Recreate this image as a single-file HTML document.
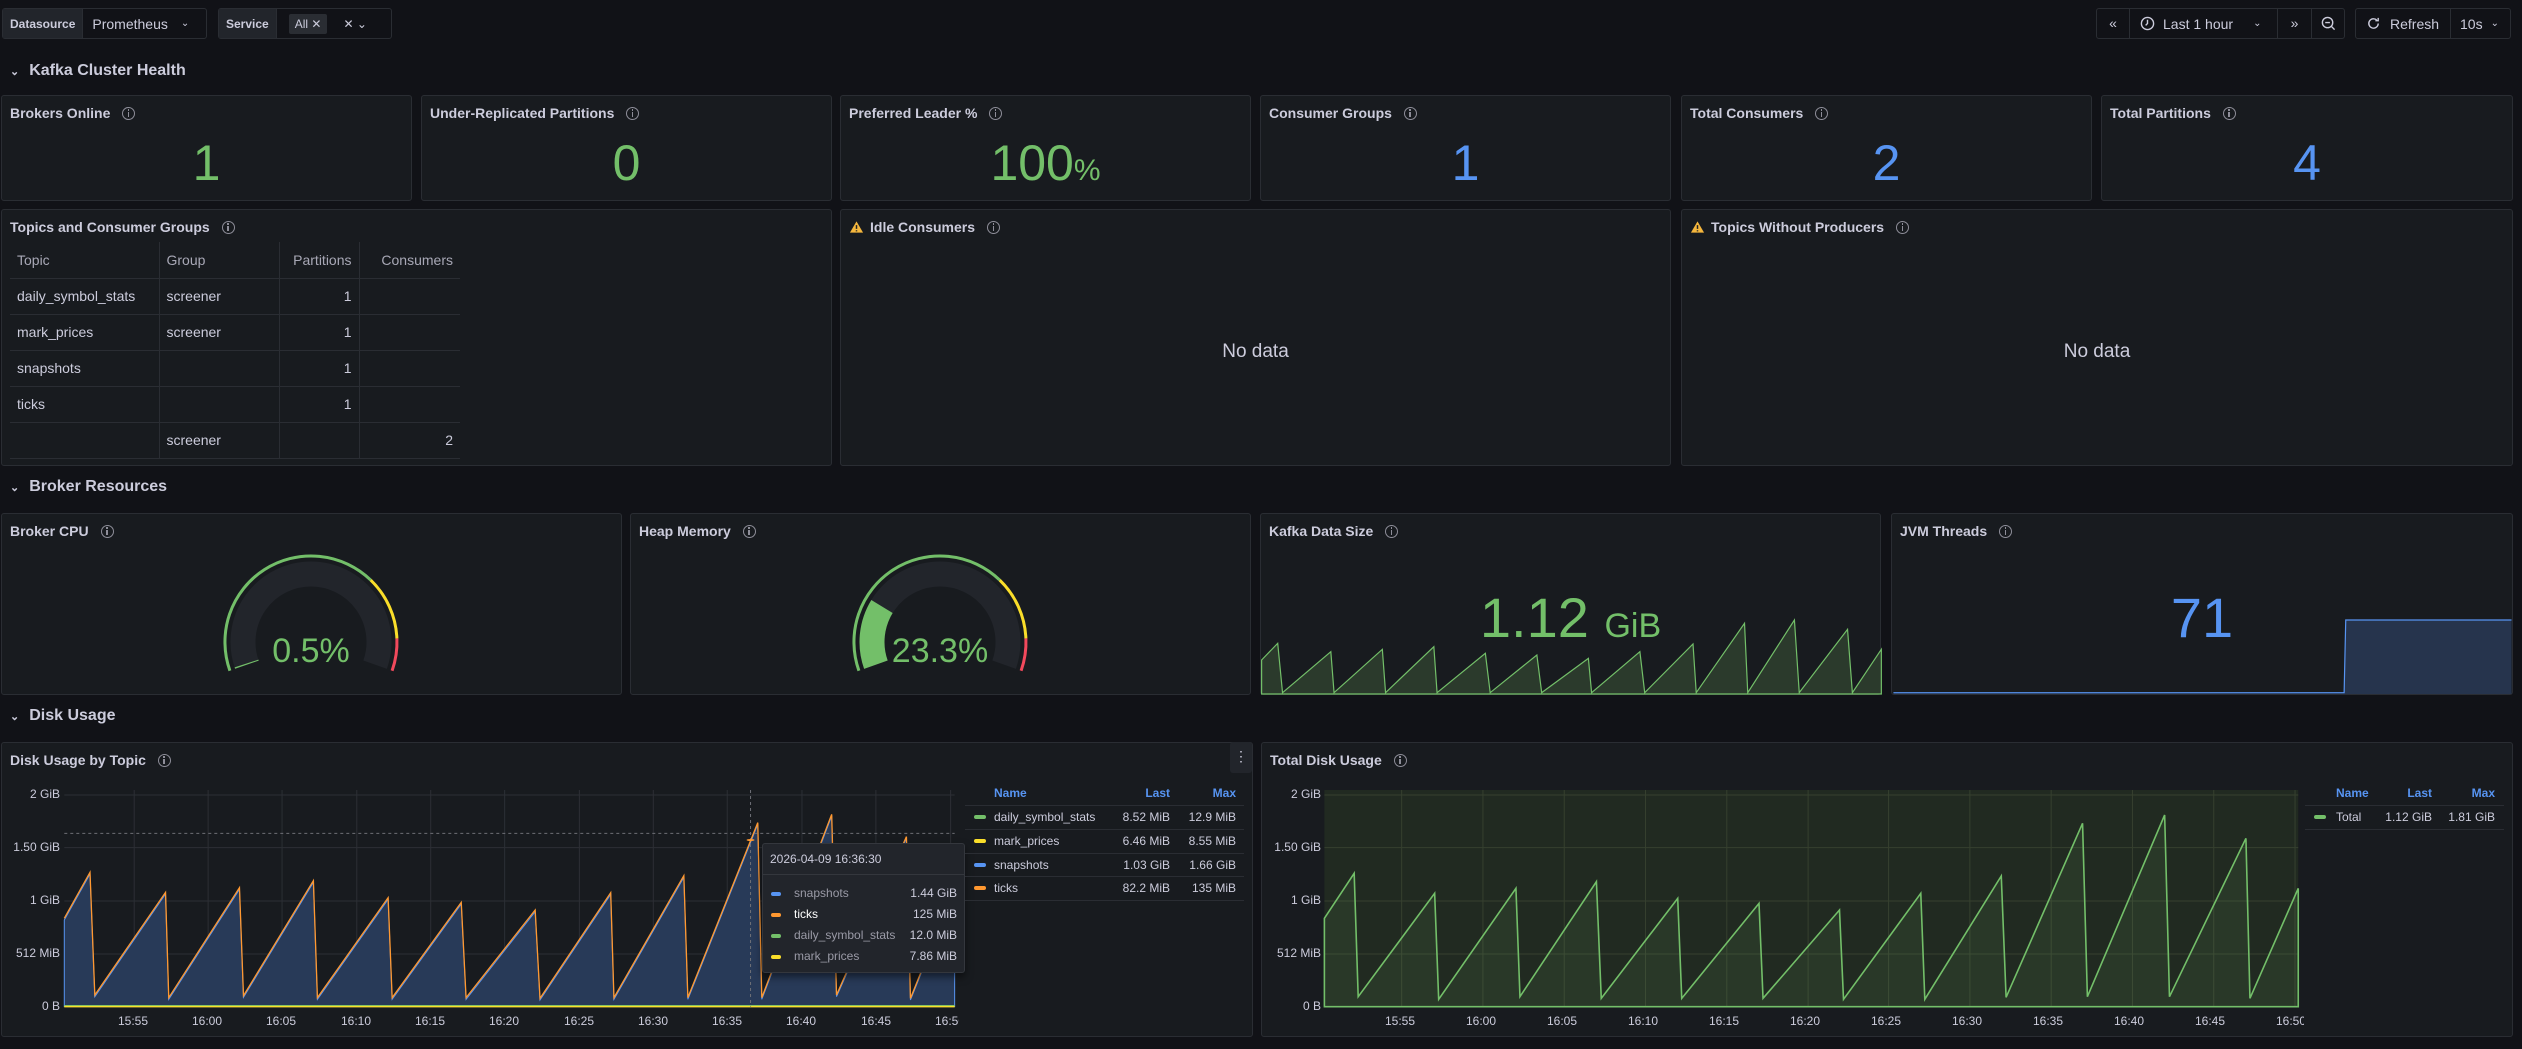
<!DOCTYPE html>
<html><head><meta charset="utf-8">
<style>
*{box-sizing:border-box;margin:0;padding:0}
body{width:2522px;height:1049px;background:#111217;font-family:"Liberation Sans",sans-serif;color:#ccccdc;position:relative;overflow:hidden}
.a{position:absolute}
.p{position:absolute;background:#181b1f;border:1px solid #2a2d33;border-radius:3px}
.t{position:absolute;left:8px;top:9px;font-size:14px;font-weight:bold;color:#ccccdc;white-space:nowrap;display:flex;align-items:center}
.i{display:inline-block;width:13px;height:13px;border:1.3px solid #8e8e99;border-radius:50%;margin-left:12px;position:relative}
.i:after{content:"";position:absolute;left:4.5px;top:4px;width:1.5px;height:5px;background:#8e8e99}
.i:before{content:"";position:absolute;left:4.5px;top:1.5px;width:1.5px;height:1.5px;background:#8e8e99}
.v{position:absolute;left:0;right:0;text-align:center;font-size:50px}
.g{color:#73bf69}.b{color:#5794f2}
.rh{position:absolute;left:10px;font-size:16px;font-weight:bold;color:#ccccdc}
.rh span{font-size:11px;color:#ccccdc;margin-right:10px;display:inline-block}
.box{position:absolute;top:8px;height:31px;border:1px solid #2a2d33;border-radius:3px;background:#111217;font-size:13px;display:flex;align-items:center}
.lbl{background:#22252b;height:100%;display:flex;align-items:center;padding:0 7px;border-right:1px solid #2a2d33;font-size:12px;font-weight:bold}
td{border-right:1px solid #2a2d33;border-bottom:1px solid #2a2d33;height:36px;padding:0 7px;font-size:14px;white-space:nowrap}
.ax{position:absolute;font-size:12px;color:#ccccdc}
.nd{position:absolute;left:0;right:0;text-align:center;font-size:19px;color:#ccccdc}
.lg{position:absolute;font-size:12px;white-space:nowrap}
.sw{position:absolute;width:12px;height:4px;border-radius:2px}
</style></head><body>

<!-- top variables -->
<div class="box" style="left:2px;width:205px"><div class="lbl">Datasource</div><span style="margin-left:9px;font-size:14px">Prometheus</span><span style="margin-left:13px;font-size:10px">⌄</span></div>
<div class="box" style="left:218px;width:174px"><div class="lbl">Service</div><span style="margin-left:12px;background:#2a2d33;padding:3px 6px;border-radius:2px;font-size:12px">All ✕</span><span style="margin-left:16px;font-size:12px">✕ ⌄</span></div>

<div class="box" style="left:2096px;width:249px;font-size:14px">
<span style="width:33px;text-align:center;border-right:1px solid #2a2d33;height:100%;line-height:29px">«</span>
<span style="width:148px;border-right:1px solid #2a2d33;height:100%;display:flex;align-items:center;padding-left:10px"><svg width="15" height="15" viewBox="0 0 16 16"><circle cx="8" cy="8" r="6.5" fill="none" stroke="#ccccdc" stroke-width="1.5"/><path d="M8 4v4l-2 2" fill="none" stroke="#ccccdc" stroke-width="1.5"/></svg><span style="margin-left:8px">Last 1 hour</span><span style="margin-left:20px;font-size:10px">⌄</span></span>
<span style="width:34px;text-align:center;border-right:1px solid #2a2d33;height:100%;line-height:29px">»</span>
<span style="width:32px;display:flex;justify-content:center"><svg width="15" height="15" viewBox="0 0 16 16"><circle cx="7" cy="7" r="5.5" fill="none" stroke="#ccccdc" stroke-width="1.5"/><path d="M4.5 7h5M11 11l3.5 3.5" stroke="#ccccdc" stroke-width="1.5"/></svg></span>
</div>
<div class="box" style="left:2355px;width:156px;font-size:14px">
<span style="width:95px;border-right:1px solid #2a2d33;height:100%;display:flex;align-items:center;padding-left:10px"><svg width="15" height="15" viewBox="0 0 16 16"><path d="M13 8a5 5 0 1 1-1.5-3.6M13 2v3h-3" fill="none" stroke="#ccccdc" stroke-width="1.5"/></svg><span style="margin-left:9px">Refresh</span></span>
<span style="padding-left:9px">10s</span><span style="margin-left:8px;font-size:10px">⌄</span>
</div>

<div class="rh" style="top:62px"><span>⌄</span>Kafka Cluster Health</div>
<div class="rh" style="top:478px"><span>⌄</span>Broker Resources</div>
<div class="rh" style="top:707px"><span>⌄</span>Disk Usage</div>

<!-- stat row -->
<div class="p" style="left:1px;top:95px;width:411px;height:106px"><div class="t">Brokers Online<span class="i"></span></div><div class="v g" style="top:38px">1</div></div>
<div class="p" style="left:421px;top:95px;width:411px;height:106px"><div class="t">Under-Replicated Partitions<span class="i"></span></div><div class="v g" style="top:38px">0</div></div>
<div class="p" style="left:840px;top:95px;width:411px;height:106px"><div class="t">Preferred Leader %<span class="i"></span></div><div class="v g" style="top:38px">100<span style="font-size:30px">%</span></div></div>
<div class="p" style="left:1260px;top:95px;width:411px;height:106px"><div class="t">Consumer Groups<span class="i"></span></div><div class="v b" style="top:38px">1</div></div>
<div class="p" style="left:1681px;top:95px;width:411px;height:106px"><div class="t">Total Consumers<span class="i"></span></div><div class="v b" style="top:38px">2</div></div>
<div class="p" style="left:2101px;top:95px;width:412px;height:106px"><div class="t">Total Partitions<span class="i"></span></div><div class="v b" style="top:38px">4</div></div>

<!-- row 2 -->
<div class="p" style="left:1px;top:209px;width:831px;height:257px"><div class="t">Topics and Consumer Groups<span class="i"></span></div>
<table class="a" style="left:8px;top:32px;border-collapse:collapse;color:#ccccdc">
<tr style="color:#a8a8b6"><td style="width:149px;border-right:1px solid #2a2d33">Topic</td><td style="width:120px">Group</td><td style="width:80px;text-align:right">Partitions</td><td style="width:101px;border-right:none;text-align:right">Consumers</td></tr>
<tr><td>daily_symbol_stats</td><td>screener</td><td style="text-align:right">1</td><td style="border-right:none"></td></tr>
<tr><td>mark_prices</td><td>screener</td><td style="text-align:right">1</td><td style="border-right:none"></td></tr>
<tr><td>snapshots</td><td></td><td style="text-align:right">1</td><td style="border-right:none"></td></tr>
<tr><td>ticks</td><td></td><td style="text-align:right">1</td><td style="border-right:none"></td></tr>
<tr><td></td><td>screener</td><td></td><td style="border-right:none;text-align:right">2</td></tr>
</table></div>
<div class="p" style="left:840px;top:209px;width:831px;height:257px"><div class="t"><svg width="15" height="14" viewBox="0 0 16 14" style="margin-right:6px"><path d="M8 1L15 13H1Z" fill="#f5b73d"/><path d="M8 5v4M8 10.5v1.2" stroke="#222" stroke-width="1.6"/></svg>Idle Consumers<span class="i"></span></div><div class="nd" style="top:131px">No data</div></div>
<div class="p" style="left:1681px;top:209px;width:832px;height:257px"><div class="t"><svg width="15" height="14" viewBox="0 0 16 14" style="margin-right:6px"><path d="M8 1L15 13H1Z" fill="#f5b73d"/><path d="M8 5v4M8 10.5v1.2" stroke="#222" stroke-width="1.6"/></svg>Topics Without Producers<span class="i"></span></div><div class="nd" style="top:131px">No data</div></div>

<!-- row 3 -->
<div class="p" style="left:1px;top:513px;width:621px;height:182px"><div class="t">Broker CPU<span class="i"></span></div></div>
<div class="p" style="left:630px;top:513px;width:621px;height:182px"><div class="t">Heap Memory<span class="i"></span></div></div>
<div class="p" style="left:1260px;top:513px;width:621px;height:182px;overflow:hidden"><div class="t">Kafka Data Size<span class="i"></span></div></div>
<div class="p" style="left:1891px;top:513px;width:622px;height:182px;overflow:hidden"><div class="t">JVM Threads<span class="i"></span></div></div>

<!-- gauges -->
<svg class="a" style="left:211px;top:542px" width="200" height="200" viewBox="0 0 200 200">
<path d="M35.9 122.7 A68 68 0 1 1 164.1 122.7" fill="none" stroke="#22252b" stroke-width="25"/>
<path d="M35.9 122.7 A68 68 0 0 1 35.5 121.5" fill="none" stroke="#73bf69" stroke-width="25"/>
<path d="M18.9 128.7 A86 86 0 0 1 159.7 38.1" fill="none" stroke="#73bf69" stroke-width="3"/>
<path d="M159.7 38.1 A86 86 0 0 1 185.9 96.4" fill="none" stroke="#fade2a" stroke-width="3"/>
<path d="M185.9 96.4 A86 86 0 0 1 181.1 128.7" fill="none" stroke="#f2495c" stroke-width="3"/>
</svg>
<div class="a g" style="left:211px;top:632px;width:200px;text-align:center;font-size:34px">0.5%</div>
<svg class="a" style="left:840px;top:542px" width="200" height="200" viewBox="0 0 200 200">
<path d="M35.9 122.7 A68 68 0 1 1 164.1 122.7" fill="none" stroke="#22252b" stroke-width="25"/>
<path d="M35.9 122.7 A68 68 0 0 1 42 64.5" fill="none" stroke="#73bf69" stroke-width="25"/>
<path d="M18.9 128.7 A86 86 0 0 1 159.7 38.1" fill="none" stroke="#73bf69" stroke-width="3"/>
<path d="M159.7 38.1 A86 86 0 0 1 185.9 96.4" fill="none" stroke="#fade2a" stroke-width="3"/>
<path d="M185.9 96.4 A86 86 0 0 1 181.1 128.7" fill="none" stroke="#f2495c" stroke-width="3"/>
</svg>
<div class="a g" style="left:840px;top:632px;width:200px;text-align:center;font-size:34px">23.3%</div>

<!-- sparklines -->
<svg class="a" style="left:1260px;top:500px" width="1262" height="230" viewBox="0 0 1568 690" preserveAspectRatio="none">
<path d="M2,480 22,430 28,578 88,455 92,578 152,448 156,578 216,440 220,578 280,460 286,578 344,465 350,578 408,475 412,578 472,455 478,578 538,432 542,578 602,370 606,578 664,360 670,578 730,388 736,578 772,448 772,582 2,582Z" fill="#2b3a2c" stroke="#73bf69" stroke-width="1.2" vector-effect="non-scaling-stroke"/>
<path d="M787,578 1347,578 1349,360 1555,360 1555,582 787,582Z" fill="#26344d"/>
<path d="M787,578 1347,578 1349,360 1555,360" fill="none" stroke="#5794f2" stroke-width="1.2" vector-effect="non-scaling-stroke"/>
</svg>
<div class="a g" style="left:1260px;top:585px;width:621px;text-align:center;font-size:56px">1.12 <span style="font-size:34px">GiB</span></div>
<div class="a b" style="left:1891px;top:585px;width:622px;text-align:center;font-size:56px">71</div>

<!-- row 4 -->
<div class="p" style="left:1px;top:742px;width:1252px;height:295px"><div class="t">Disk Usage by Topic<span class="i"></span></div></div>
<div class="a" style="left:1230px;top:742px;width:22px;height:31px;background:#22252b;border-radius:3px;text-align:center;color:#ccccdc;font-size:14px;line-height:29px">⋮</div>
<div class="p" style="left:1261px;top:742px;width:1252px;height:295px"><div class="t">Total Disk Usage<span class="i"></span></div></div>

<svg class="a" style="left:0;top:730px" width="1260" height="319" viewBox="0 0 1568 957" preserveAspectRatio="none">
<g stroke="#2c2f35" stroke-width="1" vector-effect="non-scaling-stroke">
<path d="M80,195H1188M80,353H1188M80,513H1188M80,672H1188M80,830H1188" vector-effect="non-scaling-stroke"/>
<path d="M167,180V830M259,180V830M351,180V830M444,180V830M536,180V830M628,180V830M721,180V830M813,180V830M905,180V830M998,180V830M1090,180V830M1183,180V830" vector-effect="non-scaling-stroke"/>
</g>
<path d="M80,570 112,432 118,800 206,492 210,808 298,478 303,802 390,457 395,808 483,508 488,808 574,522 580,808 666,545 672,810 760,493 764,808 851,442 856,808 943,283 948,808 1035,258 1041,800 1128,325 1133,810 1188,480 1188,830 80,830Z" fill="#283a58" stroke="#5794f2" stroke-width="1" vector-effect="non-scaling-stroke"/>
<path d="M80,565 112,427 118,795 206,487 210,803 298,473 303,797 390,452 395,803 483,503 488,803 574,517 580,803 666,540 672,805 760,488 764,803 851,437 856,803 943,278 948,803 1035,253 1041,795 1128,320 1133,805 1188,475" fill="none" stroke="#ff9830" stroke-width="1.3" vector-effect="non-scaling-stroke"/>
<path d="M80,828H1188" stroke="#73bf69" stroke-width="2" vector-effect="non-scaling-stroke"/>
<path d="M80,830H1188" stroke="#fade2a" stroke-width="1.5" vector-effect="non-scaling-stroke"/>
<path d="M80,310H1188M934,180V830" stroke="#6e6f76" stroke-dasharray="3 3" stroke-width="1" vector-effect="non-scaling-stroke"/>
<ellipse cx="934" cy="330" rx="5" ry="3" fill="#ff9830"/>
</svg>
<div class="ax" style="left:0;width:60px;text-align:right;top:787px">2 GiB</div>
<div class="ax" style="left:0;width:60px;text-align:right;top:840px">1.50 GiB</div>
<div class="ax" style="left:0;width:60px;text-align:right;top:893px">1 GiB</div>
<div class="ax" style="left:0;width:60px;text-align:right;top:946px">512 MiB</div>
<div class="ax" style="left:0;width:60px;text-align:right;top:999px">0 B</div>
<div class="ax" style="left:118px;top:1014px;width:930px;height:16px;overflow:visible">
<span class="a" style="left:0">15:55</span><span class="a" style="left:74px">16:00</span><span class="a" style="left:148px">16:05</span><span class="a" style="left:223px">16:10</span><span class="a" style="left:297px">16:15</span><span class="a" style="left:371px">16:20</span><span class="a" style="left:446px">16:25</span><span class="a" style="left:520px">16:30</span><span class="a" style="left:594px">16:35</span><span class="a" style="left:668px">16:40</span><span class="a" style="left:743px">16:45</span><span class="a" style="left:817px;width:24px;overflow:hidden">16:50</span></div>

<!-- tooltip -->
<div class="a" style="left:762px;top:843px;width:203px;height:130px;background:#22252b;border:1px solid #34373d;border-radius:3px;box-shadow:0 4px 8px rgba(0,0,0,.5);font-size:12px">
<div class="a" style="left:7px;top:8px;color:#ccccdc">2026-04-09 16:36:30</div>
<div class="a" style="left:0;right:0;top:30px;border-top:1px solid #34373d"></div>
<div class="sw" style="left:8px;top:48px;background:#5794f2;width:10px"></div><div class="a" style="left:31px;top:42px;color:#9a9aa6">snapshots</div><div class="a" style="right:7px;top:42px">1.44 GiB</div>
<div class="sw" style="left:8px;top:69px;background:#ff9830;width:10px"></div><div class="a" style="left:31px;top:63px;color:#fff">ticks</div><div class="a" style="right:7px;top:63px">125 MiB</div>
<div class="sw" style="left:8px;top:90px;background:#73bf69;width:10px"></div><div class="a" style="left:31px;top:84px;color:#9a9aa6">daily_symbol_stats</div><div class="a" style="right:7px;top:84px">12.0 MiB</div>
<div class="sw" style="left:8px;top:111px;background:#fade2a;width:10px"></div><div class="a" style="left:31px;top:105px;color:#9a9aa6">mark_prices</div><div class="a" style="right:7px;top:105px">7.86 MiB</div>
</div>

<!-- left legend -->
<div class="a" style="left:965px;top:786px;width:279px;height:120px">
<div class="lg" style="left:29px;top:0;color:#5794f2;font-weight:bold">Name</div><div class="lg" style="right:74px;top:0;color:#5794f2;font-weight:bold">Last</div><div class="lg" style="right:8px;top:0;color:#5794f2;font-weight:bold">Max</div>
<div class="a" style="left:0;right:0;top:19px;border-top:1px solid #2a2d33"></div>
<div class="sw" style="left:9px;top:29px;background:#73bf69"></div><div class="lg" style="left:29px;top:24px">daily_symbol_stats</div><div class="lg" style="right:74px;top:24px">8.52 MiB</div><div class="lg" style="right:8px;top:24px">12.9 MiB</div>
<div class="a" style="left:0;right:0;top:43px;border-top:1px solid #2a2d33"></div>
<div class="sw" style="left:9px;top:53px;background:#fade2a"></div><div class="lg" style="left:29px;top:48px">mark_prices</div><div class="lg" style="right:74px;top:48px">6.46 MiB</div><div class="lg" style="right:8px;top:48px">8.55 MiB</div>
<div class="a" style="left:0;right:0;top:67px;border-top:1px solid #2a2d33"></div>
<div class="sw" style="left:9px;top:77px;background:#5794f2"></div><div class="lg" style="left:29px;top:72px">snapshots</div><div class="lg" style="right:74px;top:72px">1.03 GiB</div><div class="lg" style="right:8px;top:72px">1.66 GiB</div>
<div class="a" style="left:0;right:0;top:90px;border-top:1px solid #2a2d33"></div>
<div class="sw" style="left:9px;top:100px;background:#ff9830"></div><div class="lg" style="left:29px;top:95px">ticks</div><div class="lg" style="right:74px;top:95px">82.2 MiB</div><div class="lg" style="right:8px;top:95px">135 MiB</div>
<div class="a" style="left:0;right:0;top:114px;border-top:1px solid #2a2d33"></div>
</div>

<!-- right chart -->
<svg class="a" style="left:1260px;top:730px" width="1262" height="319" viewBox="0 0 1568 957" preserveAspectRatio="none">
<rect x="80" y="180" width="1210" height="650" fill="#212a21"/>
<g stroke="#36402f" stroke-width="1">
<path d="M80,195H1290M80,353H1290M80,513H1290M80,672H1290M80,830H1290" vector-effect="non-scaling-stroke"/>
<path d="M176,180V830M277,180V830M378,180V830M479,180V830M580,180V830M681,180V830M781,180V830M882,180V830M983,180V830M1084,180V830M1185,180V830M1286,180V830" vector-effect="non-scaling-stroke"/>
</g>
<path d="M80,565 117,430 122,800 217,490 222,808 318,475 323,800 418,455 424,805 519,505 524,805 620,520 625,805 720,540 725,808 821,490 826,808 921,438 927,802 1022,280 1028,800 1124,255 1130,800 1225,325 1230,805 1290,475 1290,830 80,830Z" fill="rgba(115,191,105,0.1)" stroke="#73bf69" stroke-width="1.6" vector-effect="non-scaling-stroke"/>
</svg>
<div class="ax" style="left:1260px;width:61px;text-align:right;top:787px">2 GiB</div>
<div class="ax" style="left:1260px;width:61px;text-align:right;top:840px">1.50 GiB</div>
<div class="ax" style="left:1260px;width:61px;text-align:right;top:893px">1 GiB</div>
<div class="ax" style="left:1260px;width:61px;text-align:right;top:946px">512 MiB</div>
<div class="ax" style="left:1260px;width:61px;text-align:right;top:999px">0 B</div>
<div class="ax" style="left:1385px;top:1014px;width:930px;height:16px">
<span class="a" style="left:0">15:55</span><span class="a" style="left:81px">16:00</span><span class="a" style="left:162px">16:05</span><span class="a" style="left:243px">16:10</span><span class="a" style="left:324px">16:15</span><span class="a" style="left:405px">16:20</span><span class="a" style="left:486px">16:25</span><span class="a" style="left:567px">16:30</span><span class="a" style="left:648px">16:35</span><span class="a" style="left:729px">16:40</span><span class="a" style="left:810px">16:45</span><span class="a" style="left:891px;width:28px;overflow:hidden">16:50</span></div>

<div class="a" style="left:2305px;top:786px;width:199px;height:50px">
<div class="lg" style="left:31px;top:0;color:#5794f2;font-weight:bold">Name</div><div class="lg" style="right:72px;top:0;color:#5794f2;font-weight:bold">Last</div><div class="lg" style="right:9px;top:0;color:#5794f2;font-weight:bold">Max</div>
<div class="a" style="left:0;right:0;top:19px;border-top:1px solid #2a2d33"></div>
<div class="sw" style="left:9px;top:29px;background:#73bf69"></div><div class="lg" style="left:31px;top:24px">Total</div><div class="lg" style="right:72px;top:24px">1.12 GiB</div><div class="lg" style="right:9px;top:24px">1.81 GiB</div>
<div class="a" style="left:0;right:0;top:43px;border-top:1px solid #2a2d33"></div>
</div>

</body></html>
